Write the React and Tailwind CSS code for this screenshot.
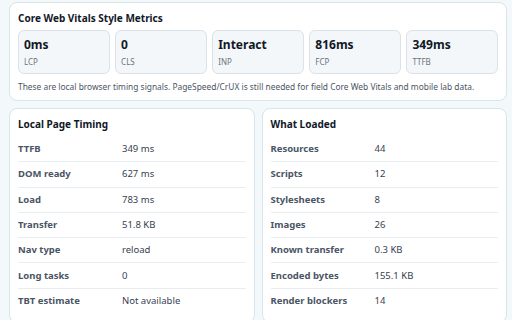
import React from "react";

const metrics = [
  { value: "0ms", label: "LCP" },
  { value: "0", label: "CLS" },
  { value: "Interact", label: "INP" },
  { value: "816ms", label: "FCP" },
  { value: "349ms", label: "TTFB" },
];

const timing = [
  ["TTFB", "349 ms"],
  ["DOM ready", "627 ms"],
  ["Load", "783 ms"],
  ["Transfer", "51.8 KB"],
  ["Nav type", "reload"],
  ["Long tasks", "0"],
  ["TBT estimate", "Not available"],
];

const loaded = [
  ["Resources", "44"],
  ["Scripts", "12"],
  ["Stylesheets", "8"],
  ["Images", "26"],
  ["Known transfer", "0.3 KB"],
  ["Encoded bytes", "155.1 KB"],
  ["Render blockers", "14"],
];

function InfoCard({ title, rows }) {
  return (
    <section className="rounded-lg border border-[#d9e4eb] bg-white px-2 pt-[8px] pb-[8px]">
      <h3 className="text-[10px] font-bold leading-[14px] text-[#111827]">{title}</h3>
      <div className="mt-[6px]">
        {rows.map(([label, value], i) => (
          <div
            key={label}
            className={
              "flex h-[25.3px] items-center text-[9.5px] " +
              (i < rows.length - 1 ? "border-b border-[#e8eef2]" : "")
            }
          >
            <span className="w-[104px] font-bold text-[#4a5565]">{label}</span>
            <span className="text-[#374151]">{value}</span>
          </div>
        ))}
      </div>
    </section>
  );
}

export default function App() {
  return (
    <div className="min-h-screen bg-[#f3f8fb] pl-[9px] pr-[5px] pt-[2px] font-['Noto_Sans',sans-serif]">
      <section className="rounded-lg border border-[#d9e4eb] bg-white px-2 pt-[8px] pb-[7px]">
        <h2 className="text-[10px] font-bold leading-[14px] text-[#111827]">Core Web Vitals Style Metrics</h2>
        <div className="mt-[5px] grid grid-cols-5 gap-[5.5px]">
          {metrics.map((m) => (
            <div key={m.label} className="h-[44px] rounded-md border border-[#d9e3e9] bg-[#f4f7f9] px-[5px] pt-[6px]">
              <div className="text-[12px] font-bold leading-[16px] text-[#111827]">{m.value}</div>
              <div className="mt-[4px] text-[8px] leading-[10px] text-[#6b7280]">{m.label}</div>
            </div>
          ))}
        </div>
        <p className="mt-[7px] text-[8.4px] leading-[12px] text-[#4b5563]">
          These are local browser timing signals. PageSpeed/CrUX is still needed for field Core Web Vitals and mobile lab data.
        </p>
      </section>
      <div className="mt-[7px] grid grid-cols-2 gap-[7px]">
        <InfoCard title="Local Page Timing" rows={timing} />
        <InfoCard title="What Loaded" rows={loaded} />
      </div>
    </div>
  );
}
